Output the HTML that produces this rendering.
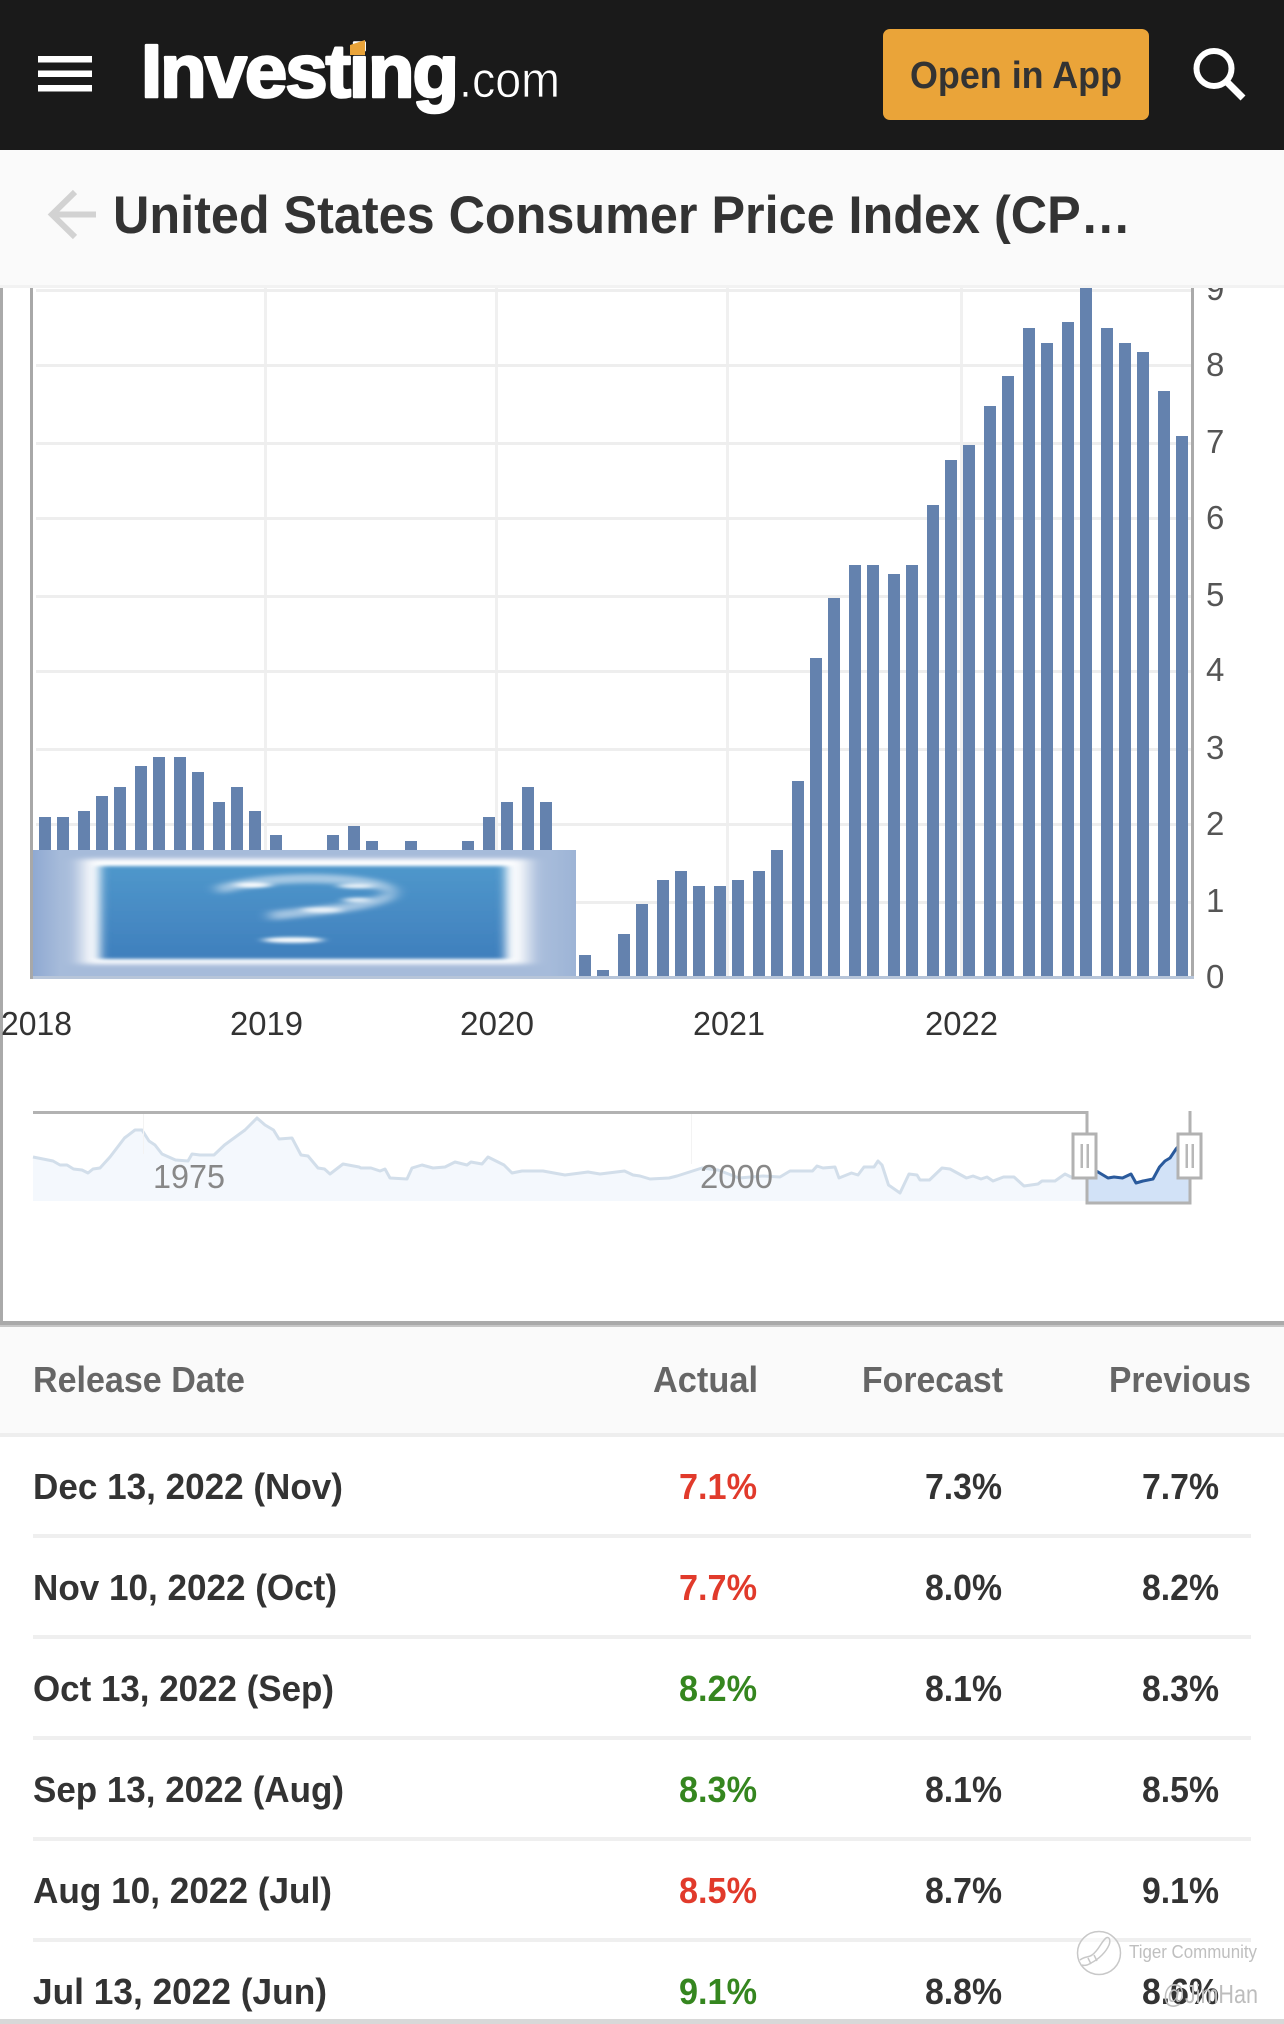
<!DOCTYPE html>
<html lang="en">
<head>
<meta charset="utf-8">
<title>United States Consumer Price Index (CPI)</title>
<style>
html,body{margin:0;padding:0;background:#fff}
svg{display:block}
text{font-family:"Liberation Sans",Arial,sans-serif}
.b{font-weight:700}
.ya{font-size:33px;fill:#555}
.xa{font-size:33px;fill:#333}
.mn{font-size:33px;fill:#888}
.th{font-size:36px;font-weight:700;fill:#666}
.td{font-size:36px;font-weight:700;fill:#333}
.r{fill:#e13a2b}
.g{fill:#35861f}
</style>
</head>
<body>
<svg xmlns="http://www.w3.org/2000/svg" width="1284" height="2024" viewBox="0 0 1284 2024">
<defs>
<linearGradient id="imgH" x1="0" x2="1" y1="0" y2="0">
<stop offset="0" stop-color="#8fa9d2"/><stop offset=".05" stop-color="#a6bbda"/><stop offset=".95" stop-color="#a6bbda"/><stop offset="1" stop-color="#9db4d6"/>
</linearGradient>
<linearGradient id="blue" x1="0" x2="0" y1="0" y2="1">
<stop offset="0" stop-color="#4f97cb"/><stop offset="1" stop-color="#3f7fbd"/>
</linearGradient>
<filter id="bl6" x="-10%" y="-20%" width="120%" height="140%"><feGaussianBlur stdDeviation="9 2.5"/></filter>
<filter id="bl3" x="-10%" y="-10%" width="120%" height="120%"><feGaussianBlur stdDeviation="5 1.5"/></filter>
<filter id="bl2" x="-30%" y="-100%" width="160%" height="300%"><feGaussianBlur stdDeviation="7 2.2"/></filter>
<filter id="bl1" x="-50%" y="-200%" width="200%" height="500%"><feGaussianBlur stdDeviation="5 1.6"/></filter>
<clipPath id="imgClip"><rect x="33" y="850" width="543" height="126"/></clipPath>
</defs>

<rect width="1284" height="2024" fill="#fff"/>

<!-- chart grid -->
<g fill="#f0f0f0">
<rect x="264" y="288" width="3" height="688"/>
<rect x="495" y="288" width="3" height="688"/>
<rect x="726" y="288" width="3" height="688"/>
<rect x="960" y="288" width="3" height="688"/>
</g>
<g fill="#eeeeee">
<rect x="36" y="289" width="1155" height="3"/>
<rect x="36" y="364" width="1155" height="3"/>
<rect x="36" y="442" width="1155" height="3"/>
<rect x="36" y="517" width="1155" height="3"/>
<rect x="36" y="595" width="1155" height="3"/>
<rect x="36" y="670" width="1155" height="3"/>
<rect x="36" y="748" width="1155" height="3"/>
<rect x="36" y="823" width="1155" height="3"/>
<rect x="36" y="901" width="1155" height="3"/>
</g>

<!-- bars -->
<path fill="#6482ae" d="M39 817h12V976h-12zM57 817h12V976h-12zM78 811h12V976h-12zM96 796h12V976h-12zM114 787h12V976h-12zM135 766h12V976h-12zM153 757h12V976h-12zM174 757h12V976h-12zM192 772h12V976h-12zM213 802h12V976h-12zM231 787h12V976h-12zM249 811h12V976h-12zM270 835h12V976h-12zM288 855h12V976h-12zM306 862h12V976h-12zM327 835h12V976h-12zM348 826h12V976h-12zM366 841h12V976h-12zM384 855h12V976h-12zM405 841h12V976h-12zM423 853h12V976h-12zM444 853h12V976h-12zM462 841h12V976h-12zM483 817h12V976h-12zM501 802h12V976h-12zM522 787h12V976h-12zM540 802h12V976h-12zM558 862h12V976h-12zM579 955h12V976h-12zM597 970h12V976h-12zM618 934h12V976h-12zM636 904h12V976h-12zM657 880h12V976h-12zM675 871h12V976h-12zM693 886h12V976h-12zM714 886h12V976h-12zM732 880h12V976h-12zM753 871h12V976h-12zM771 850h12V976h-12zM792 781h12V976h-12zM810 658h12V976h-12zM828 598h12V976h-12zM849 565h12V976h-12zM867 565h12V976h-12zM888 574h12V976h-12zM906 565h12V976h-12zM927 505h12V976h-12zM945 460h12V976h-12zM963 445h12V976h-12zM984 406h12V976h-12zM1002 376h12V976h-12zM1023 328h12V976h-12zM1041 343h12V976h-12zM1062 322h12V976h-12zM1080 280h12V976h-12zM1101 328h12V976h-12zM1119 343h12V976h-12zM1137 352h12V976h-12zM1158 391h12V976h-12zM1176 436h12V976h-12z"/>

<!-- broken image placeholder -->
<g clip-path="url(#imgClip)">
<rect x="33" y="850" width="543" height="126" fill="url(#imgH)"/>
<rect x="82" y="859" width="446" height="105" fill="#fff" filter="url(#bl6)"/>
<rect x="100" y="866" width="406" height="93" fill="url(#blue)" filter="url(#bl3)"/>
<path d="M218 890C250 880 300 876 345 880 390 884 400 892 385 898 360 908 320 910 270 916" fill="none" stroke="#dfeaf5" stroke-width="9" opacity=".6" filter="url(#bl2)"/>
<g fill="#fff" filter="url(#bl1)">
<ellipse cx="253" cy="885" rx="18" ry="2.5"/>
<ellipse cx="356" cy="886" rx="18" ry="2.5" opacity=".85"/>
<ellipse cx="357" cy="900" rx="14" ry="2.5" opacity=".8"/>
<ellipse cx="322" cy="910" rx="20" ry="2.5" opacity=".85"/>
<ellipse cx="293" cy="940" rx="30" ry="2.8"/>
</g>
</g>

<!-- axes -->
<rect x="0" y="288" width="3" height="1036" fill="#aaaaaa"/>
<rect x="30" y="288" width="3" height="691" fill="#a8a8a8"/>
<rect x="1191" y="288" width="3" height="691" fill="#aaaaaa"/>
<rect x="33" y="976" width="1161" height="3" fill="#b7c5d9"/>

<!-- y labels -->
<g class="ya">
<text class="ya" x="1206" y="300">9</text>
<text class="ya" x="1206" y="376">8</text>
<text class="ya" x="1206" y="453">7</text>
<text class="ya" x="1206" y="529">6</text>
<text class="ya" x="1206" y="606">5</text>
<text class="ya" x="1206" y="681">4</text>
<text class="ya" x="1206" y="759">3</text>
<text class="ya" x="1206" y="835">2</text>
<text class="ya" x="1206" y="912">1</text>
<text class="ya" x="1206" y="988">0</text>
</g>

<!-- x labels -->
<text class="xa" x="1" y="1035" textLength="71" lengthAdjust="spacingAndGlyphs">2018</text>
<text class="xa" x="230" y="1035" textLength="73" lengthAdjust="spacingAndGlyphs">2019</text>
<text class="xa" x="460" y="1035" textLength="74" lengthAdjust="spacingAndGlyphs">2020</text>
<text class="xa" x="693" y="1035" textLength="72" lengthAdjust="spacingAndGlyphs">2021</text>
<text class="xa" x="925" y="1035" textLength="73" lengthAdjust="spacingAndGlyphs">2022</text>

<!-- navigator -->
<path fill="#f4f8fd" d="M33 1157L53 1161 60 1165 67 1165 73.5 1169 82 1170 88 1173 93 1169 100 1168 110 1157 124.5 1138 135 1130 142 1130 149 1141 155 1145 162 1154 175.5 1160 188 1161 192 1154 200 1155 214 1155 224.5 1145 245 1130 257 1118 265 1125 273.5 1130 279 1139 292 1138 301 1155 308 1156 318 1168 324.5 1169 330 1174 343 1164 359 1167 361 1168 371 1168 380 1171 385 1169 390 1178 407 1179 412 1168 422 1165 433 1168 445 1167 455 1162 467 1165 471 1162 482 1164 488 1157 504 1165 512 1173 522 1171 543 1171 565 1175 588 1172 600 1174 624.5 1171 633 1175 640 1176 650 1179 669 1178 677 1176 702 1168 718 1170 739 1178 763 1176 780 1177 790 1171 812.5 1171 817 1166 823 1168 835 1167 839 1178 851.5 1173 858 1175 864 1167 874 1167 878 1161 882 1165 888.5 1185 900 1193 909 1174 917 1175 920 1180 929.5 1180 942 1168 950 1169 966.5 1178 973 1176 981 1179 987 1177 993 1181 1003.5 1177 1014 1177 1024 1186 1038 1184 1042 1181 1055 1181 1065 1174 1071 1177 1087 1177V1201H33z"/>
<path fill="none" stroke="#d2deea" stroke-width="3" stroke-linejoin="round" d="M33 1157L53 1161 60 1165 67 1165 73.5 1169 82 1170 88 1173 93 1169 100 1168 110 1157 124.5 1138 135 1130 142 1130 149 1141 155 1145 162 1154 175.5 1160 188 1161 192 1154 200 1155 214 1155 224.5 1145 245 1130 257 1118 265 1125 273.5 1130 279 1139 292 1138 301 1155 308 1156 318 1168 324.5 1169 330 1174 343 1164 359 1167 361 1168 371 1168 380 1171 385 1169 390 1178 407 1179 412 1168 422 1165 433 1168 445 1167 455 1162 467 1165 471 1162 482 1164 488 1157 504 1165 512 1173 522 1171 543 1171 565 1175 588 1172 600 1174 624.5 1171 633 1175 640 1176 650 1179 669 1178 677 1176 702 1168 718 1170 739 1178 763 1176 780 1177 790 1171 812.5 1171 817 1166 823 1168 835 1167 839 1178 851.5 1173 858 1175 864 1167 874 1167 878 1161 882 1165 888.5 1185 900 1193 909 1174 917 1175 920 1180 929.5 1180 942 1168 950 1169 966.5 1178 973 1176 981 1179 987 1177 993 1181 1003.5 1177 1014 1177 1024 1186 1038 1184 1042 1181 1055 1181 1065 1174 1071 1177 1087 1177"/>
<rect x="143" y="1114" width="1" height="40" fill="#f3f3f3"/>
<rect x="691" y="1114" width="1" height="50" fill="#f3f3f3"/>
<path fill="#d2e2f7" d="M1088 1170L1098 1172 1108 1178 1114 1177 1122.5 1178 1131 1174 1136 1183 1143 1181 1153 1179 1159.5 1167 1165 1161 1170 1158 1176 1149 1184 1138 1189 1134V1202H1088z"/>
<path fill="none" stroke="#2a5a9c" stroke-width="3" stroke-linejoin="round" d="M1096 1171L1098 1172 1108 1178 1114 1177 1122.5 1178 1131 1174 1136 1183 1143 1181 1153 1179 1159.5 1167 1165 1161 1170 1158 1176 1149 1182 1142"/>
<text class="mn" x="153" y="1188" textLength="72" lengthAdjust="spacingAndGlyphs">1975</text>
<text class="mn" x="700" y="1188" textLength="73" lengthAdjust="spacingAndGlyphs">2000</text>
<path fill="none" stroke="#b2b2b2" stroke-width="3" d="M33 1112.5H1087V1203H1190V1111"/>
<g>
<rect x="1073" y="1134" width="23" height="44" fill="#fff" stroke="#b2b2b2" stroke-width="3"/>
<rect x="1080.5" y="1144" width="2.5" height="24" fill="#b8b8b8"/>
<rect x="1086.5" y="1144" width="2.5" height="24" fill="#b8b8b8"/>
<rect x="1178" y="1134" width="23" height="44" fill="#fff" stroke="#b2b2b2" stroke-width="3"/>
<rect x="1185.5" y="1144" width="2.5" height="24" fill="#b8b8b8"/>
<rect x="1191.5" y="1144" width="2.5" height="24" fill="#b8b8b8"/>
</g>

<!-- chart frame bottom -->
<rect x="0" y="1321" width="1284" height="4" fill="#aaaaaa"/>
<rect x="0" y="1325" width="1284" height="2" fill="#c6c6c6"/>

<!-- table head -->
<rect x="0" y="1327" width="1284" height="106" fill="#fafafa"/>
<rect x="0" y="1433" width="1284" height="4" fill="#eeeeee"/>
<text class="th" x="33" y="1392" textLength="212" lengthAdjust="spacingAndGlyphs">Release Date</text>
<text class="th" x="653" y="1392" textLength="105" lengthAdjust="spacingAndGlyphs">Actual</text>
<text class="th" x="862" y="1392" textLength="141" lengthAdjust="spacingAndGlyphs">Forecast</text>
<text class="th" x="1109" y="1392" textLength="142" lengthAdjust="spacingAndGlyphs">Previous</text>

<!-- rows -->
<text class="td" x="33" y="1499" textLength="310" lengthAdjust="spacingAndGlyphs">Dec 13, 2022 (Nov)</text>
<text class="td r" x="679" y="1499" textLength="78" lengthAdjust="spacingAndGlyphs">7.1%</text>
<text class="td" x="925" y="1499" textLength="77" lengthAdjust="spacingAndGlyphs">7.3%</text>
<text class="td" x="1142" y="1499" textLength="77" lengthAdjust="spacingAndGlyphs">7.7%</text>
<rect x="33" y="1534" width="1218" height="4" fill="#efefef"/>

<text class="td" x="33" y="1600" textLength="304" lengthAdjust="spacingAndGlyphs">Nov 10, 2022 (Oct)</text>
<text class="td r" x="679" y="1600" textLength="78" lengthAdjust="spacingAndGlyphs">7.7%</text>
<text class="td" x="925" y="1600" textLength="77" lengthAdjust="spacingAndGlyphs">8.0%</text>
<text class="td" x="1142" y="1600" textLength="77" lengthAdjust="spacingAndGlyphs">8.2%</text>
<rect x="33" y="1635" width="1218" height="4" fill="#efefef"/>

<text class="td" x="33" y="1701" textLength="301" lengthAdjust="spacingAndGlyphs">Oct 13, 2022 (Sep)</text>
<text class="td g" x="679" y="1701" textLength="78" lengthAdjust="spacingAndGlyphs">8.2%</text>
<text class="td" x="925" y="1701" textLength="77" lengthAdjust="spacingAndGlyphs">8.1%</text>
<text class="td" x="1142" y="1701" textLength="77" lengthAdjust="spacingAndGlyphs">8.3%</text>
<rect x="33" y="1736" width="1218" height="4" fill="#efefef"/>

<text class="td" x="33" y="1802" textLength="311" lengthAdjust="spacingAndGlyphs">Sep 13, 2022 (Aug)</text>
<text class="td g" x="679" y="1802" textLength="78" lengthAdjust="spacingAndGlyphs">8.3%</text>
<text class="td" x="925" y="1802" textLength="77" lengthAdjust="spacingAndGlyphs">8.1%</text>
<text class="td" x="1142" y="1802" textLength="77" lengthAdjust="spacingAndGlyphs">8.5%</text>
<rect x="33" y="1837" width="1218" height="4" fill="#efefef"/>

<text class="td" x="33" y="1903" textLength="299" lengthAdjust="spacingAndGlyphs">Aug 10, 2022 (Jul)</text>
<text class="td r" x="679" y="1903" textLength="78" lengthAdjust="spacingAndGlyphs">8.5%</text>
<text class="td" x="925" y="1903" textLength="77" lengthAdjust="spacingAndGlyphs">8.7%</text>
<text class="td" x="1142" y="1903" textLength="77" lengthAdjust="spacingAndGlyphs">9.1%</text>
<rect x="33" y="1938" width="1218" height="4" fill="#efefef"/>

<text class="td" x="33" y="2004" textLength="294" lengthAdjust="spacingAndGlyphs">Jul 13, 2022 (Jun)</text>
<text class="td g" x="679" y="2004" textLength="78" lengthAdjust="spacingAndGlyphs">9.1%</text>
<text class="td" x="925" y="2004" textLength="77" lengthAdjust="spacingAndGlyphs">8.8%</text>
<text class="td" x="1142" y="2004" textLength="77" lengthAdjust="spacingAndGlyphs">8.6%</text>
<rect x="0" y="2019" width="1284" height="5" fill="#d8d8d8"/>

<!-- watermark -->
<g fill="none" stroke="#c8c8c8" stroke-width="1.5">
<circle cx="1099" cy="1953" r="21.5" fill="#fff" fill-opacity=".55"/>
<path d="M1080 1960c5-4 8-2 12-5 7-5 9-13 14-17 3-2 5 2 3 7-3 7-10 14-18 18-3 2-6 3-9 2"/>
<path d="M1088 1958l3 6M1094 1955l3 6"/>
</g>
<text x="1129" y="1958" font-size="18" fill="#bfbfbf" textLength="128" lengthAdjust="spacingAndGlyphs">Tiger Community</text>
<text x="1163" y="2003" font-size="26" fill="#bdbdbd" textLength="95" lengthAdjust="spacingAndGlyphs">@JimHan</text>

<!-- sub header -->
<rect x="0" y="150" width="1284" height="135" fill="#fafafa"/>
<rect x="0" y="285" width="1284" height="3" fill="#f2f2f2"/>
<path fill="none" stroke="#d2d2d2" stroke-width="6" d="M75 192L52 214.5 75 237M52 214.5H96"/>
<text class="b" x="113" y="233" font-size="53" fill="#333" textLength="1018" lengthAdjust="spacingAndGlyphs">United States Consumer Price Index (CP…</text>

<!-- header -->
<rect x="0" y="0" width="1284" height="150" fill="#1a1a1a"/>
<rect x="38" y="56" width="54" height="6.5" fill="#fff"/>
<rect x="38" y="70.5" width="54" height="6.5" fill="#fff"/>
<rect x="38" y="85" width="54" height="6.5" fill="#fff"/>
<text class="b" x="141" y="97" font-size="75" fill="#fff" stroke="#fff" stroke-width="2.6" stroke-linejoin="round" letter-spacing="-2" textLength="316" lengthAdjust="spacingAndGlyphs">Investing</text>
<polygon points="350,45 365,40 365,55 350,55" fill="#eaa439"/>
<text x="459" y="97" font-size="50" fill="#fff" stroke="#1a1a1a" stroke-width=".7" textLength="101" lengthAdjust="spacingAndGlyphs">.com</text>
<rect x="883" y="29" width="266" height="91" rx="7" fill="#eaa439"/>
<text class="b" x="910" y="88" font-size="38" fill="#333" textLength="212" lengthAdjust="spacingAndGlyphs">Open in App</text>
<circle cx="1214" cy="68.5" r="17.5" fill="none" stroke="#fff" stroke-width="6"/>
<path d="M1227 82L1243 98" stroke="#fff" stroke-width="7" fill="none"/>
</svg>
</body>
</html>
